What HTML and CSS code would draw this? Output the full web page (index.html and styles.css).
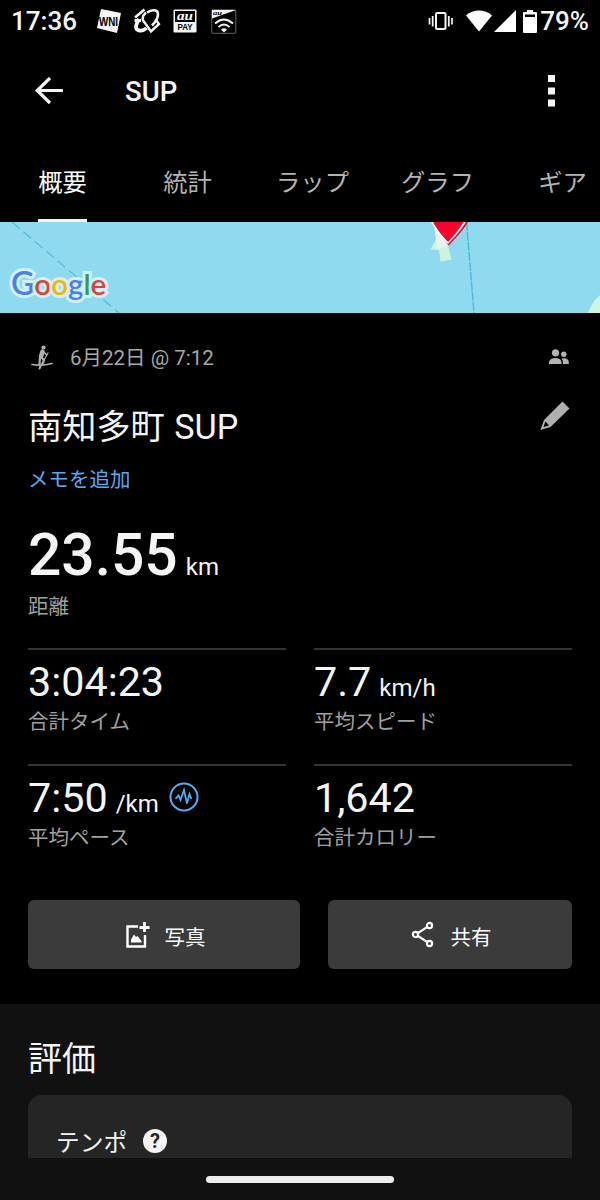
FILE: index.html
```
<!DOCTYPE html>
<html lang="ja">

<head>
    <meta charset="UTF-8">
    <meta name="viewport" content="width=device-width, initial-scale=1.0">
    <title>SUP</title>
    <link rel="stylesheet" href="styles.css">
</head>

<body>
    <div class="status-bar">
        <span class="clock">17:36</span>
        <div class="notifications">
            <svg width="24" height="24" viewBox="0 0 24 24">
                <path d="M4 0 L24 4 L20 24 L0 19 Z" fill="#f5f5f5"/>
                <text x="2" y="17" class="wni" textLength="19" lengthAdjust="spacingAndGlyphs">WNI</text>
            </svg>
            <svg width="28" height="26" viewBox="0 0 28 26" fill="none" stroke="#f5f5f5">
                <path d="M2 9.500 L11.500 1.500" stroke-width="2.600"/>
                <path d="M1.500 12.500 H8" stroke-width="3"/>
                <path d="M6 11 C2 18 2 22 6.500 22.500 C10 23 12 21.500 13.500 20" stroke-width="3.800"/>
                <path d="M14 4.500 C19 1 25 1.500 25 6 C25 10 22.500 14 19 17.500" stroke-width="2.600"/>
                <path d="M13 4.500 C9 8 8.500 12 12 15 L18 23.500 L26 16 L23 12" stroke-width="2.400"/>
            </svg>
            <svg width="24" height="24" viewBox="0 0 24 24">
                <rect x=".5" y=".5" width="23" height="23" rx="1" fill="#f5f5f5"/>
                <rect x="2" y="2" width="20" height="11" fill="#000"/>
                <text x="12" y="11" class="au" text-anchor="middle" textLength="16" lengthAdjust="spacingAndGlyphs">au</text>
                <text x="12" y="21" class="pay" text-anchor="middle" textLength="15" lengthAdjust="spacingAndGlyphs">PAY</text>
            </svg>
            <svg class="au-wifi" width="26" height="25" viewBox="0 0 26 25">
                <rect x=".8" y=".8" width="24" height="23.500" rx="1" fill="#000" stroke="#aaa" stroke-width=".6"/>
                <path d="M1 1 H25 L1 9.500 Z" fill="#f5f5f5"/>
                <text x="2" y="6" class="au-small" textLength="9" lengthAdjust="spacingAndGlyphs">au</text>
                <g fill="none" stroke="#f5f5f5" stroke-width="2">
                    <path d="M4 14.500 Q13 6.500 22 14.500"/>
                    <path d="M7.500 18 Q13 13 18.500 18"/>
                </g>
                <path d="M10 20.500 Q13 18 16 20.500 L13 23.500 Z" fill="#f5f5f5"/>
            </svg>
        </div>
        <div class="system">
            <svg class="vibrate" width="26" height="20" viewBox="0 0 26 20" fill="none" stroke="#f5f5f5">
                <rect x="8" y="2" width="9.500" height="16" rx="1" stroke-width="2"/>
                <path d="M4.700 5 V15.500 M20.800 5 V15.500" stroke-width="1.800"/>
                <path d="M1.500 7 V13.500 M24 7 V13.500" stroke-width="1.700"/>
            </svg>
            <svg class="wifi" width="28" height="22" viewBox="0 0 28 22">
                <path d="M1 5.500 C8 -1.200 20 -1.200 27 5.500 L14 21.500 Z" fill="#fff"/>
            </svg>
            <svg class="signal" width="22" height="22" viewBox="0 0 22 22"><path d="M22 0 V22 H0 Z" fill="#fff"/></svg>
            <svg class="battery" width="14" height="23" viewBox="0 0 14 23">
                <path d="M1 2 H4 V0 H10 V2 H13 Q14 2 14 3 V22 Q14 23 13 23 H1 Q0 23 0 22 V3 Q0 2 1 2 Z" fill="#fff"/>
                <rect x="2" y="4.500" width="10" height="2.500" fill="#000"/>
            </svg>
            <span class="percent">79%</span>
        </div>
    </div>

    <header class="app-bar">
        <svg width="30" height="28" viewBox="0 0 30 28" fill="none" stroke="#f5f5f5" stroke-width="3.200">
            <path d="M29 13.500 H3 M16 1 L3.200 13.500 L16 26"/>
        </svg>
        <h1>SUP</h1>
        <svg class="more" width="7" height="32" viewBox="0 0 7 32" fill="#f5f5f5">
            <rect width="7" height="7"/>
            <rect y="12.500" width="7" height="7"/>
            <rect y="24.500" width="7" height="7"/>
        </svg>
    </header>

    <nav class="tabs">
        <a class="active">概要</a>
        <a>統計</a>
        <a>ラップ</a>
        <a>グラフ</a>
        <a>ギア</a>
    </nav>

    <div class="map">
        <svg width="600" height="91" viewBox="0 0 600 91">
            <path d="M12 0 L119 91" stroke="#52bdd2" stroke-width="1.200" stroke-dasharray="10 5" fill="none"/>
            <path d="M466.500 0 L474 91" stroke="#4db9da" stroke-width="1.400" stroke-dasharray="9 1" fill="none"/>
            <path d="M436 8 L436 17 L430.500 27.500 L439 28 L440.500 39.500 L451.500 37.500 L447.500 22 Z" fill="#cff2dd"/>
            <path d="M434 2 L437 27 L447 24 Z" fill="#e8f3ee"/>
            <path d="M600 73 Q592 80 588 91 H600 Z" fill="#cff5e0"/>
            <path d="M433 0 H468 Q463 9 448.500 23.500 Z" fill="#d40b35"/>
            <path d="M431 0 H466 Q460 10 448 22 Q439 14 431 0 Z" fill="#fff"/>
            <path d="M433 0 H463.500 Q459 8 448 20 Q439 11 433 0 Z" fill="#fb0029"/>
        </svg>
        <div class="google"><span class="blue big">G</span><span class="red">o</span><span class="yellow">o</span><span class="blue">g</span><span class="green">l</span><span class="red">e</span></div>
    </div>

    <main class="summary">
        <div class="meta">
            <svg width="22" height="25" viewBox="0 0 22 25" fill="none" stroke="#b0b0b0" stroke-linecap="round">
                <circle cx="12.500" cy="2.500" r="2.100" fill="#b0b0b0" stroke="none"/>
                <path d="M11.500 6.500 L10 11.500" stroke-width="4.400"/>
                <path d="M10 12 L13 15 L11.500 19 M9 12 L8.500 19" stroke-width="2.200"/>
                <path d="M12 6 L15.500 10" stroke-width="1.500"/>
                <path d="M17 8 L8.500 23" stroke-width="1.200"/>
                <path d="M1 19.500 Q11 21 21 18.500" stroke-width="1.700"/>
                <path d="M9.500 21.500 L8.500 23.500" stroke-width="2"/>
            </svg>
            <span>6月22日 @ 7:12</span>
            <svg class="people" width="20" height="16" viewBox="0 0 20 16" fill="#b3b3b3">
                <circle cx="6.500" cy="3.800" r="3.600"/>
                <path d="M0 15 V13 Q1 9 6.500 9 Q11.500 9 12.500 13 V15 Z"/>
                <circle cx="14.800" cy="5.200" r="2.700"/>
                <path d="M14 15 V13 Q13.800 11 12.600 9.500 Q19 8.500 19.800 13 V15 Z"/>
            </svg>
        </div>

        <div class="title-row">
            <h2>南知多町 SUP</h2>
            <svg width="30" height="30" viewBox="0 0 30 30">
                <path d="M22.500 .5 L29.500 7.500 L10.500 26 L.500 29 L4 19 Z" fill="#b0b0b0"/>
                <path d="M5.500 20.500 L3.500 26 L9 24.500 Z" fill="#000"/>
            </svg>
        </div>
        <a class="note">メモを追加</a>

        <div class="distance">
            <div class="value">23.55<small>km</small></div>
            <div class="label">距離</div>
        </div>

        <div class="stats">
            <div class="stat">
                <div class="value">3:04:23</div>
                <div class="label">合計タイム</div>
            </div>
            <div class="stat">
                <div class="value">7.7<small>km/h</small></div>
                <div class="label">平均スピード</div>
            </div>
            <div class="stat">
                <div class="value">7:50<small>/km</small>
                    <svg class="pace-icon" width="30" height="30" viewBox="0 0 30 30" fill="none" stroke="#58aaf0">
                        <circle cx="15" cy="15" r="13.500" stroke-width="2"/>
                        <path d="M6.500 17 L9.500 13.500 L11.500 18 L15 8 L18 21.500 L20.500 12 L22.500 17" stroke-width="1.800"/>
                    </svg>
                </div>
                <div class="label">平均ペース</div>
            </div>
            <div class="stat">
                <div class="value">1,642</div>
                <div class="label">合計カロリー</div>
            </div>
        </div>

        <div class="actions">
            <button>
                <svg width="25" height="26" viewBox="0 0 25 26">
                    <path d="M13 4.500 H2.500 V24.500 H20 V13" fill="none" stroke="#fff" stroke-width="2.400"/>
                    <path d="M19.500 0 V10 M14.500 5.500 H24.500" stroke="#fff" stroke-width="2.800"/>
                    <path d="M6 20.500 V17.500 L9 12.500 L11 15 L12.500 14 L16.500 19 V20.500 Z" fill="#fff"/>
                </svg>
                <span>写真</span>
            </button>
            <button>
                <svg width="23" height="27" viewBox="0 0 23 27" fill="none" stroke="#fff" stroke-width="2.200">
                    <circle cx="4.500" cy="13.500" r="2.600"/>
                    <circle cx="18.500" cy="4.500" r="2.600"/>
                    <circle cx="18.500" cy="22.500" r="2.600"/>
                    <path d="M7 12 L16 6.200 M7 15 L16 20.800"/>
                </svg>
                <span>共有</span>
            </button>
        </div>
    </main>

    <section class="rating">
        <h2>評価</h2>
        <div class="card">
            <span>テンポ</span>
            <span class="help">?</span>
        </div>
    </section>

    <div class="gesture-bar"><div class="handle"></div></div>
</body>
</html>
```
FILE: styles.css
```
* {
    box-sizing: border-box;
}

body {
    margin: 0;
    height: 1200px;
    overflow: hidden;
    background-color: #000;
    color: #f5f5f5;
    font-family: Roboto, "Noto Sans CJK JP", sans-serif;
}

svg {
    display: block;
    flex-shrink: 0;
}

h1, h2 {
    margin: 0;
    font-weight: 400;
}

/* Status bar */
.status-bar {
    display: flex;
    align-items: center;
    height: 42px;
    padding: 0 11px;
}

.clock {
    width: 86px;
    font-size: 26px;
    font-weight: 500;
}

.notifications {
    display: flex;
    align-items: center;
    gap: 12px;
}

.wni {
    font: bold 12px "Liberation Sans", sans-serif;
    fill: #000;
}

.au {
    font: italic bold 12px "Liberation Serif", serif;
    fill: #fff;
}

.pay {
    font: bold 8.5px "Liberation Sans", sans-serif;
    fill: #000;
}

.au-small {
    font: italic bold 7px "Liberation Serif", serif;
    fill: #000;
}

.au-wifi {
    margin-left: 2px;
}

.system {
    display: flex;
    align-items: center;
    margin-left: auto;
}

.wifi {
    margin-left: 11px;
}

.signal {
    margin-left: 1px;
}

.battery {
    margin: 0 3px 0 7px;
}

.percent {
    font-size: 26px;
    font-weight: 500;
}

/* App bar */
.app-bar {
    display: flex;
    align-items: center;
    height: 98px;
    padding: 0 45px 0 34px;
}

.app-bar h1 {
    margin-left: 61px;
    font-size: 27.5px;
    font-weight: 500;
}

.more {
    margin-left: auto;
}

.tabs {
    display: grid;
    grid-template-columns: repeat(5, 125px);
    justify-items: center;
    height: 82px;
    overflow: hidden;
}

.tabs a {
    height: 82px;
    font-size: 24.3px;
    line-height: 86px;
    color: #b3b3b3;
}

.tabs .active {
    color: #fff;
    border-bottom: 3px solid #f5f5f5;
}

/* Map preview */
.map {
    position: relative;
    height: 91px;
    background-color: #8fdaee;
}

.google {
    position: absolute;
    left: 11px;
    top: 41px;
    font-family: Lato, sans-serif;
    font-size: 29.5px;
    font-weight: 600;
    line-height: 40px;
    -webkit-text-stroke: 6px #d3eff7;
    paint-order: stroke fill;
}

.google .big {
    font-size: 32px;
}

.blue {
    color: #4880ec;
}

.red {
    color: #db4437;
}

.yellow {
    color: #f4b400;
}

.green {
    color: #2e9e56;
}

/* Activity summary */
.summary {
    height: 691px;
    padding: 0 28px;
}

.meta {
    display: flex;
    align-items: center;
    height: 88px;
    padding: 0 3px;
    font-size: 20.5px;
    color: #a8a8a8;
}

.meta span {
    margin-left: 17px;
    padding-bottom: 2px;
}

.people {
    margin-left: auto;
}

.title-row {
    display: flex;
    justify-content: space-between;
    height: 55px;
    padding-right: 2px;
}

.title-row h2 {
    font-size: 34.2px;
    line-height: 52px;
    word-spacing: 1px;
}

.note {
    display: block;
    height: 60px;
    font-size: 20.5px;
    line-height: 48px;
    color: #58aaf0;
}

.value {
    display: flex;
    align-items: baseline;
}

.label {
    font-size: 20.5px;
    line-height: 30px;
    color: #a0a0a0;
}

.distance {
    height: 132px;
}

.distance .value {
    height: 76px;
    font-size: 58.7px;
    font-weight: 500;
    line-height: 79px;
}

.value small {
    margin-left: 8px;
    font-size: 24px;
    font-weight: 400;
}

.stats {
    display: grid;
    grid-template-columns: 1fr 1fr;
    column-gap: 28px;
}

.stat {
    height: 115.5px;
    border-top: 2px solid #333;
}

.stat .value {
    height: 57px;
    font-size: 41.3px;
    line-height: 64px;
}

.pace-icon {
    align-self: flex-start;
    margin: 16px 0 0 10px;
}

.actions {
    display: flex;
    gap: 28px;
    margin-top: 21px;
}

.actions button {
    display: flex;
    align-items: center;
    justify-content: center;
    gap: 15px;
    width: 272px;
    height: 69px;
    padding: 0 0 0 2px;
    border: none;
    border-radius: 6px;
    background-color: #3b3b3b;
    color: #fff;
    font: inherit;
    font-size: 20.5px;
}

.actions span {
    padding-top: 2px;
}

.actions button:last-child {
    gap: 17px;
    width: 244px;
    padding-left: 2px;
}

/* Rating */
.rating {
    height: 154px;
    padding: 0 28px;
    overflow: hidden;
    background-color: #111;
}

.rating h2 {
    height: 91px;
    font-size: 34px;
    line-height: 111px;
}

.card {
    display: flex;
    align-items: center;
    height: 91px;
    padding: 0 28px;
    border-radius: 14px;
    background-color: #252525;
    font-size: 23.7px;
}

.help {
    width: 24px;
    height: 24px;
    margin-left: 16px;
    border-radius: 50%;
    background-color: #f5f5f5;
    color: #252525;
    font-size: 20px;
    font-weight: 700;
    line-height: 24px;
    text-align: center;
}

.gesture-bar {
    display: flex;
    align-items: center;
    justify-content: center;
    height: 42px;
    background-color: #111;
}

.handle {
    width: 188px;
    height: 7px;
    border-radius: 4px;
    background-color: #ececec;
}
```
